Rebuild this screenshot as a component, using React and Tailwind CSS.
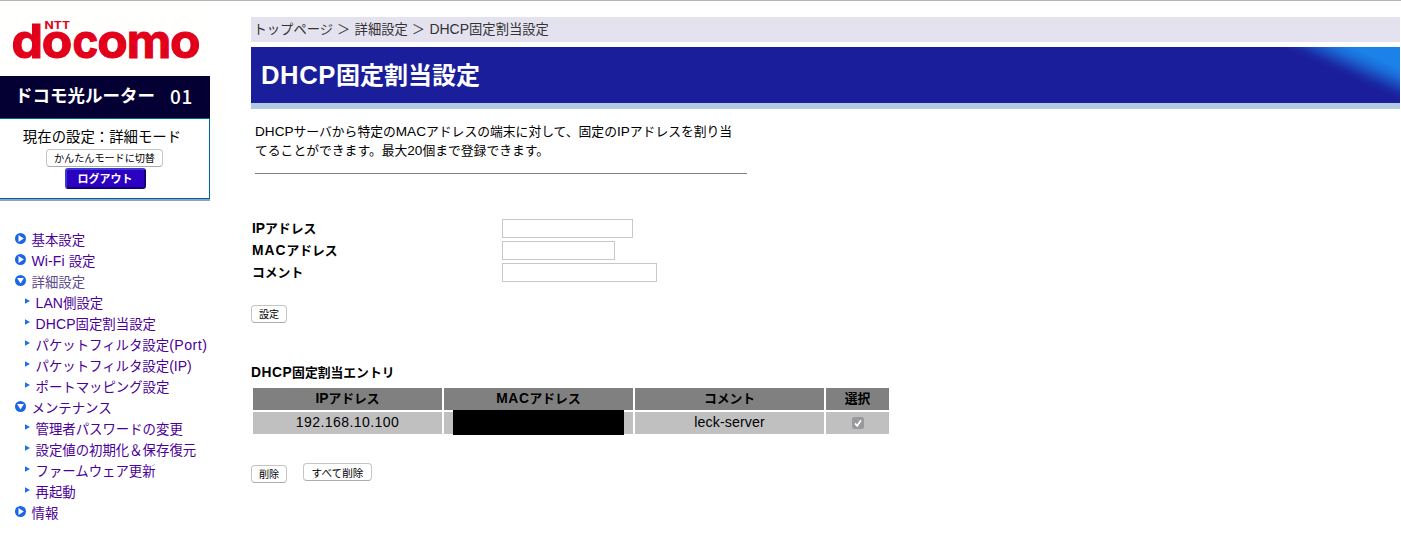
import React from "react";

const FONT = "font-['Liberation_Sans','Noto_Sans_CJK_JP',sans-serif]";

const MENU = [
  { label: "基本設定", type: "closed" },
  { latin: "Wi-Fi ", label: "設定", type: "closed" },
  { label: "詳細設定", type: "open", muted: true },
  { latin: "LAN", label: "側設定", type: "sub" },
  { latin: "DHCP", label: "固定割当設定", type: "sub" },
  { label: "パケットフィルタ設定", tail: "(Port)", type: "sub" },
  { label: "パケットフィルタ設定", tail: "(IP)", type: "sub" },
  { label: "ポートマッピング設定", type: "sub" },
  { label: "メンテナンス", type: "open" },
  { label: "管理者パスワードの変更", type: "sub" },
  { label: "設定値の初期化＆保存復元", type: "sub" },
  { label: "ファームウェア更新", type: "sub" },
  { label: "再起動", type: "sub" },
  { label: "情報", type: "closed" },
];

function Logo() {
  const letters = [
    ["d", 11.5, 31.5],
    ["o", 41.8, 30.5],
    ["c", 72.6, 25.8],
    ["o", 97.2, 30.5],
    ["m", 126.8, 44.5],
    ["o", 170, 30.5],
  ];
  return (
    <svg width="210" height="75" viewBox="0 0 210 75" className="block bg-[#fffffd]" fill="#e2001a">
      <g className="font-[Inter,sans-serif] font-bold" fontSize="47" stroke="#e2001a" strokeWidth="1.1">
        {letters.map(([ch, x, w], i) => (
          <text key={i} x={x} y="56.8" textLength={w} lengthAdjust="spacingAndGlyphs">{ch}</text>
        ))}
      </g>
      <text x="44.6" y="27.6" fontSize="10.2" textLength="25.4" lengthAdjust="spacingAndGlyphs" className="font-[Inter,sans-serif] font-bold">NTT</text>
    </svg>
  );
}

function Bullet({ type }) {
  if (type === "sub") {
    return (
      <svg width="5" height="6" viewBox="0 0 5 6" className="mt-[5px] mr-[5.5px] ml-[10px] shrink-0">
        <path d="M0 0.2L5 3L0 5.8Z" fill="#1e6fe8" />
      </svg>
    );
  }
  return (
    <svg width="11" height="11" viewBox="0 0 11 11" className="mt-[3px] mr-[5.5px] shrink-0">
      <circle cx="5.5" cy="5.5" r="5.5" fill="#1a66e6" />
      {type === "open" ? (
        <path d="M2.1 3H8.9L5.5 8.6Z" fill="#fff" />
      ) : (
        <path d="M3.5 2.1V8.9L8.8 5.5Z" fill="#fff" />
      )}
    </svg>
  );
}

function Button({ className, children }) {
  return (
    <button
      className={
        "flex items-center justify-center rounded-[4px] border border-[#c4c4c4] border-b-[#acacac] bg-white pt-[2px] leading-none whitespace-nowrap text-black " +
        className
      }
    >
      {children}
    </button>
  );
}

function Field({ label, latin, latinClass, inputClass }) {
  return (
    <div className="flex h-[22px] items-center">
      <label className="w-[250px] text-[12.8px] leading-[19px] font-bold">
        {latin && <span className={latinClass}>{latin}</span>}
        {label}
      </label>
      <input className={"h-[19px] border border-[#c8c8c8] bg-white outline-none " + inputClass} />
    </div>
  );
}

function Sidebar() {
  return (
    <aside className="w-[210px] shrink-0">
      <Logo />
      <div className="flex h-[42px] items-center bg-[#050033] pl-[15px] text-[17.5px] leading-none font-bold whitespace-pre text-white">
        <span>ドコモ光ルーター</span>
        <span className="mt-[-3px] ml-[15px] font-['Noto_Sans_CJK_JP',sans-serif] text-[19px] font-medium tracking-[0.6px]">01</span>
      </div>
      <div className="flex h-[81px] flex-col items-center border-t border-r border-b border-[#006699]">
        <div className="mt-[8px] mr-[5px] text-[14.4px] leading-[21px] whitespace-nowrap">現在の設定：詳細モード</div>
        <Button className="mt-[1px] h-[18px] w-[117px] text-[10.1px]">かんたんモードに切替</Button>
        <button className="mt-[1px] ml-[1px] flex h-[21px] w-[81px] items-center justify-center rounded-[3px] border-2 border-t-[#3a3ad0] border-r-[#100078] border-b-[#100078] border-l-[#3a3ad0] bg-[#2b00c0] pt-[1px] text-[11px] leading-none font-bold text-white">
          ログアウト
        </button>
      </div>
      <div className="h-[2px] bg-[#8ea3c4]" />
      <nav className="mt-[29px] pl-[15px] text-[13.4px] leading-[21px] whitespace-pre">
        {MENU.map((m, i) => (
          <a key={i} className={"flex h-[21px] " + (m.muted ? "text-[#5c4a8c]" : "text-[#4b0098]")}>
            <Bullet type={m.type} />
            <span>
              {m.latin && <span className="text-[14px] tracking-[0.1px]">{m.latin}</span>}
              {m.label}
              {m.tail && (
                <span className={m.tail === "(Port)" ? "text-[14.2px] tracking-[0.45px]" : "text-[14px]"}>{m.tail}</span>
              )}
            </span>
          </a>
        ))}
      </nav>
    </aside>
  );
}

function Banner() {
  return (
    <div className="relative mt-[5px] h-[62px] border-b-[6px] border-[#b0cbde] bg-[#1a1e9a]">
      <svg className="absolute top-0 right-0" width="150" height="56" viewBox="-35 0 150 56">
        <defs>
          <linearGradient id="glow" gradientUnits="userSpaceOnUse" x1="58" y1="28" x2="70" y2="1">
            <stop offset="0" stopColor="#1a1e9a" />
            <stop offset="0.2" stopColor="#1a2aa4" />
            <stop offset="0.45" stopColor="#1a4cbe" />
            <stop offset="0.7" stopColor="#1b6cd8" />
            <stop offset="1" stopColor="#1c82ea" />
          </linearGradient>
        </defs>
        <rect x="-35" width="150" height="56" fill="url(#glow)" />
      </svg>
      <h1 className="relative pl-[10px] text-[24px] leading-[56px] font-bold text-white">
        <span className="text-[25.6px] tracking-[0.6px]">DHCP</span>固定割当設定
      </h1>
    </div>
  );
}

function EntryTable() {
  const head = "flex h-[22px] items-center justify-center bg-[#808080] text-[12.8px] font-bold leading-[20px] pb-[1px]";
  const cell = "flex h-[22px] items-center justify-center bg-[#c0c0c0] leading-[20px] pb-[2px]";
  return (
    <div className="relative mt-[4px] ml-[2px] grid w-[636px] grid-cols-[189px_189px_189px_63px] gap-[2px]">
      <div className={head}><span className="text-[13.8px]">IP</span>アドレス</div>
      <div className={head}><span className="text-[13.8px] tracking-[0.6px]">MAC</span>アドレス</div>
      <div className={head}>コメント</div>
      <div className={head}>選択</div>
      <div className={cell + " text-[14px] tracking-[0.43px]"}>192.168.10.100</div>
      <div className={cell} />
      <div className={cell + " text-[14.2px] tracking-[0.1px]"}>leck-server</div>
      <div className={cell}>
        <svg width="12" height="12" viewBox="0 0 12 12" className="mt-[1px]">
          <rect width="12" height="12" rx="2.5" fill="#98989d" />
          <path d="M3 6.4L5.2 8.8L9 3.2" fill="none" stroke="#fff" strokeWidth="1.7" />
        </svg>
      </div>
      <div className="absolute top-[21.5px] left-[200px] h-[25px] w-[171px] bg-black" />
    </div>
  );
}

export default function App() {
  return (
    <div className={"flex h-[556px] w-[1401px] overflow-hidden border-t border-[#b4b4b4] bg-white text-black " + FONT}>
      <Sidebar />
      <main className="ml-[41px] w-[1149px]">
        <div className="mt-[16px] h-[25px] bg-[#e4e2ef] pl-[2.5px] text-[13.3px] leading-[25px] whitespace-pre text-[#333]">
          トップページ<span className="tracking-[0.3px]"> ＞ </span>詳細設定<span className="tracking-[0.3px]"> ＞ </span>
          <span className="text-[14px]">DHCP</span>固定割当設定
        </div>
        <Banner />
        <p className="mt-[13px] ml-[4px] h-[52px] w-[492px] border-b border-[#808080] text-[12.8px] leading-[19px] whitespace-nowrap">
          <span className="text-[13.6px]">DHCP</span>サーバから特定の<span className="text-[13.6px]">MAC</span>アドレスの端末に対して、固定の<span className="text-[13.6px]">IP</span>アドレスを割り当
          <br />
          てることができます。最大<span className="text-[13.6px]">20</span>個まで登録できます。
        </p>
        <div className="mt-[43px] ml-[1px]">
          <Field latin="IP" latinClass="text-[13.8px]" label="アドレス" inputClass="w-[131px]" />
          <Field latin="MAC" latinClass="text-[13.8px] tracking-[1px]" label="アドレス" inputClass="w-[113px]" />
          <Field label="コメント" inputClass="w-[155px]" />
        </div>
        <Button className="mt-[22px] h-[18px] w-[36px] text-[10.1px]">設定</Button>
        <h2 className="mt-[40px] mb-[5px] text-[12.8px] leading-[20px] font-bold">
          <span className="text-[13.8px] tracking-[0.5px]">DHCP</span>固定割当エントリ
        </h2>
        <EntryTable />
        <div className="mt-[29px] flex gap-[16px]">
          <Button className="mt-[2px] h-[18px] w-[36px] text-[10.1px]">削除</Button>
          <Button className="h-[18px] w-[69px] text-[10.6px]">すべて削除</Button>
        </div>
      </main>
    </div>
  );
}
